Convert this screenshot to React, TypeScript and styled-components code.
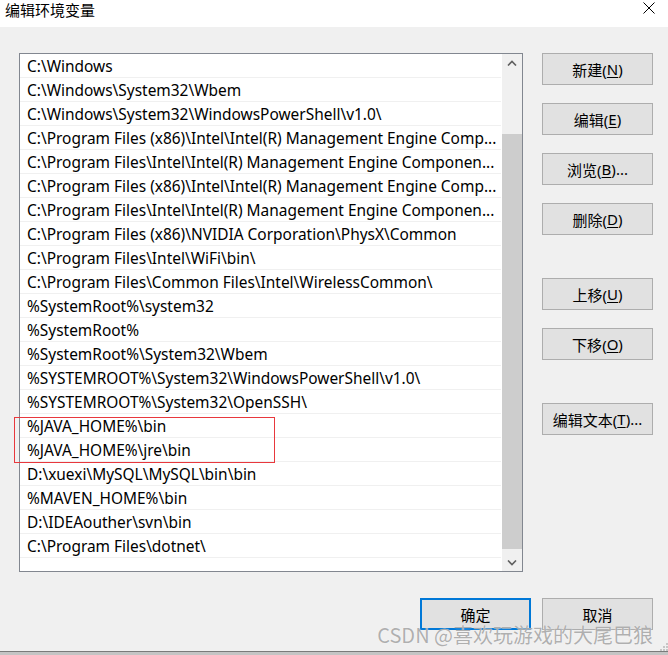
import React from 'react';
import styled, { createGlobalStyle } from 'styled-components';

const GlobalStyle = createGlobalStyle`
  html, body {
    margin: 0;
    padding: 0;
    background: #f0f0f0;
  }
  body {
    font-family: "Noto Sans", "Noto Sans CJK SC", sans-serif;
  }
`;

const paths = [
  'C:\\Windows',
  'C:\\Windows\\System32\\Wbem',
  'C:\\Windows\\System32\\WindowsPowerShell\\v1.0\\',
  'C:\\Program Files (x86)\\Intel\\Intel(R) Management Engine Comp...',
  'C:\\Program Files\\Intel\\Intel(R) Management Engine Componen...',
  'C:\\Program Files (x86)\\Intel\\Intel(R) Management Engine Comp...',
  'C:\\Program Files\\Intel\\Intel(R) Management Engine Componen...',
  'C:\\Program Files (x86)\\NVIDIA Corporation\\PhysX\\Common',
  'C:\\Program Files\\Intel\\WiFi\\bin\\',
  'C:\\Program Files\\Common Files\\Intel\\WirelessCommon\\',
  '%SystemRoot%\\system32',
  '%SystemRoot%',
  '%SystemRoot%\\System32\\Wbem',
  '%SYSTEMROOT%\\System32\\WindowsPowerShell\\v1.0\\',
  '%SYSTEMROOT%\\System32\\OpenSSH\\',
  '%JAVA_HOME%\\bin',
  '%JAVA_HOME%\\jre\\bin',
  'D:\\xuexi\\MySQL\\MySQL\\bin\\bin',
  '%MAVEN_HOME%\\bin',
  'D:\\IDEAouther\\svn\\bin',
  'C:\\Program Files\\dotnet\\',
];

// side buttons: label, access key, suffix, gap before it
const sideButtons = [
  { label: '新建', key: 'N', tail: '', gap: 0 },
  { label: '编辑', key: 'E', tail: '', gap: 18 },
  { label: '浏览', key: 'B', tail: '...', gap: 18 },
  { label: '删除', key: 'D', tail: '', gap: 18 },
  { label: '上移', key: 'U', tail: '', gap: 43 },
  { label: '下移', key: 'O', tail: '', gap: 18 },
  { label: '编辑文本', key: 'T', tail: '...', gap: 43 },
];

const App = () => {
  return (
    <>
      <GlobalStyle />
      <Window>
        <TitleBar>
          <Title>编辑环境变量</Title>
          <CloseIcon width="12" height="12" viewBox="0 0 12 12">
            <path d="M0.5 0.5 L11.5 11.5 M11.5 0.5 L0.5 11.5" stroke="#000" strokeWidth="1" fill="none" />
          </CloseIcon>
        </TitleBar>

        <Body>
          <MainRow>
            <ListBox>
              <Rows>
                {paths.map((p) => (
                  <Row key={p}>{p}</Row>
                ))}
              </Rows>
              <ScrollBar>
                <ArrowButton>
                  <svg width="10" height="6" viewBox="0 0 10 6">
                    <polyline points="1,5.5 5,1.5 9,5.5" stroke="#606060" strokeWidth="1.6" fill="none" />
                  </svg>
                </ArrowButton>
                <Track>
                  <Thumb $offset={63} $size={415} />
                </Track>
                <ArrowButton>
                  <svg width="10" height="6" viewBox="0 0 10 6">
                    <polyline points="1,0.5 5,4.5 9,0.5" stroke="#606060" strokeWidth="1.6" fill="none" />
                  </svg>
                </ArrowButton>
              </ScrollBar>
              <Highlight />
            </ListBox>

            <SideColumn>
              {sideButtons.map((b) => (
                <Button key={b.label} $gap={b.gap}>
                  {b.label}(<u>{b.key}</u>){b.tail}
                </Button>
              ))}
            </SideColumn>
          </MainRow>

          <Footer>
            <Button $primary>确定</Button>
            <Button>取消</Button>
          </Footer>
        </Body>

        <BottomEdge />
        <Watermark>CSDN @喜欢玩游戏的大尾巴狼</Watermark>
        <Grip width="10" height="10" viewBox="0 0 10 10">
          {[
            [8, 2],
            [5, 5], [8, 5],
            [2, 8], [5, 8], [8, 8],
          ].map(([x, y]) => (
            <rect key={`${x}-${y}`} x={x} y={y} width="2" height="2" fill="#c6c6c6" />
          ))}
        </Grip>
      </Window>
    </>
  );
};

const Window = styled.div`
  position: relative;
  width: 668px;
  height: 655px;
  display: flex;
  flex-direction: column;
  background: #f0f0f0;
  overflow: hidden;
`;

const TitleBar = styled.div`
  height: 27px;
  flex: none;
  background: #fff;
  display: flex;
  align-items: flex-start;
  justify-content: space-between;
  padding: 0 13px 0 5px;
`;

const Title = styled.div`
  font-family: "Noto Sans CJK SC", sans-serif;
  font-size: 15px;
  line-height: 19px;
  color: #000;
`;

const CloseIcon = styled.svg`
  margin-top: 2px;
`;

const Body = styled.div`
  flex: 1;
  display: flex;
  flex-direction: column;
  padding: 26px 15px 0 19px;
`;

const MainRow = styled.div`
  display: flex;
  gap: 19px;
  height: 519px;
`;

const ListBox = styled.div`
  position: relative;
  width: 504px;
  box-sizing: border-box;
  border: 1px solid #828790;
  background: #fff;
  display: flex;
`;

const Rows = styled.div`
  flex: 1;
  min-width: 0;
`;

const Row = styled.div`
  height: 23px;
  border-bottom: 1px solid #f0f0f0;
  padding-left: 7px;
  display: flex;
  align-items: center;
  white-space: nowrap;
  overflow: hidden;
  font-size: 15.45px;
  color: #000;
`;

const ScrollBar = styled.div`
  width: 20px;
  flex: none;
  background: #f0f0f0;
  display: flex;
  flex-direction: column;
  margin-left: 1px;
`;

const ArrowButton = styled.div`
  height: 17px;
  flex: none;
  display: flex;
  align-items: center;
  justify-content: center;
`;

const Track = styled.div`
  flex: 1;
  position: relative;
`;

const Thumb = styled.div<{ $offset: number; $size: number }>`
  margin-top: ${(p) => p.$offset}px;
  height: ${(p) => p.$size}px;
  background: #cdcdcd;
`;

const Highlight = styled.div`
  position: absolute;
  left: -6px;
  top: 363px;
  width: 259px;
  height: 44px;
  border: 1px solid #e8383d;
  pointer-events: none;
`;

const SideColumn = styled.div`
  display: flex;
  flex-direction: column;
  width: 111px;
`;

const Button = styled.button<{ $gap?: number; $primary?: boolean }>`
  width: 111px;
  height: 32px;
  margin-top: ${(p) => p.$gap ?? 0}px;
  box-sizing: border-box;
  background: #e1e1e1;
  border: ${(p) => (p.$primary ? '2px solid #0078d7' : '1px solid #adadad')};
  border-radius: 0;
  padding: 0;
  font-family: "Noto Sans", "Noto Sans CJK SC", sans-serif;
  font-size: 15px;
  color: #000;
  display: flex;
  align-items: center;
  justify-content: center;

  u {
    text-decoration-thickness: 1px;
    text-underline-offset: 2px;
  }
`;

const Footer = styled.div`
  display: flex;
  justify-content: flex-end;
  gap: 11px;
  margin-top: 26px;
`;

const BottomEdge = styled.div`
  height: 3px;
  flex: none;
  border-top: 1px solid #7a7a7a;
  background: #c4c4c4;
`;

const Watermark = styled.div`
  position: absolute;
  right: 15px;
  bottom: 9px;
  font-family: "Noto Sans CJK SC", sans-serif;
  font-size: 20px;
  line-height: 22px;
  color: rgba(150, 150, 150, 0.75);
  text-shadow: 0 0 1px rgba(255, 255, 255, 0.9);
  pointer-events: none;
`;

const Grip = styled.svg`
  position: absolute;
  right: 0;
  bottom: 4px;
`;

export default App;
